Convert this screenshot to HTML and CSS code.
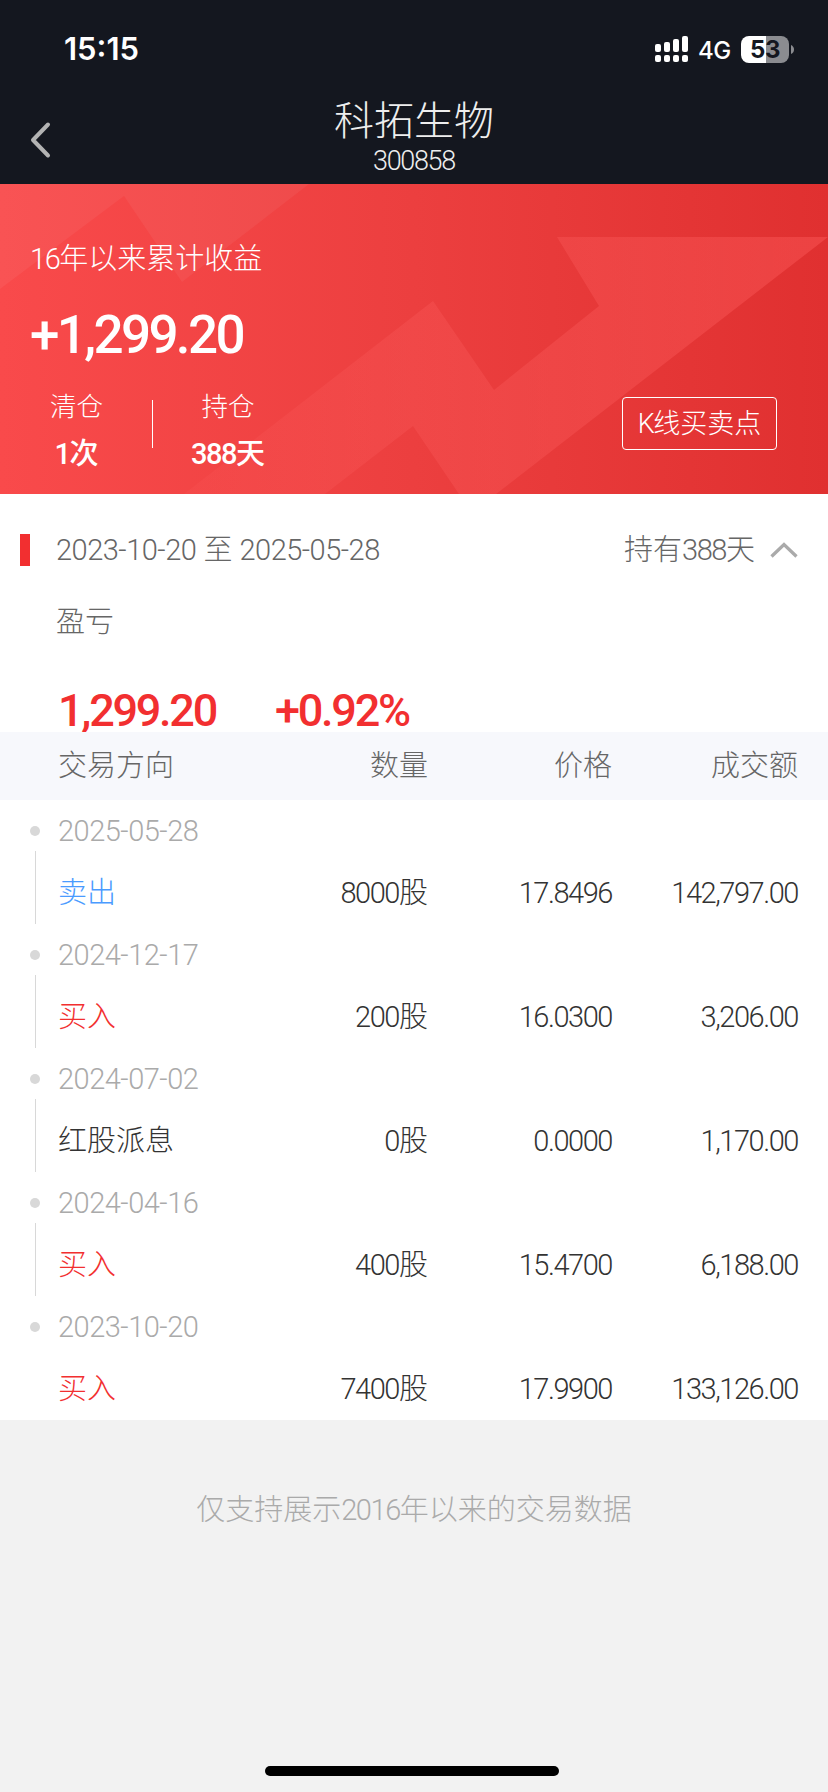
FILE: index.html
```html
<!DOCTYPE html>
<html lang="zh-CN">
<head>
<meta charset="utf-8">
<title>科拓生物</title>
<link rel="stylesheet" href="styles.css">
</head>
<body>
<header class="top">
  <div class="status">
    <span class="time">15:15</span>
    <div class="status-right">
      <svg class="signal" width="33" height="26" viewBox="0 0 33 26" fill="#fff">
        <rect x="0" y="8" width="6" height="8" rx="2"/><rect x="9" y="6" width="6" height="10" rx="2"/><rect x="18" y="3" width="6" height="13" rx="2"/><rect x="27" y="0" width="6" height="16" rx="2"/>
        <rect x="0" y="19" width="6" height="7" rx="2"/><rect x="9" y="19" width="6" height="7" rx="2"/><rect x="18" y="19" width="6" height="7" rx="2"/><rect x="27" y="19" width="6" height="7" rx="2"/>
      </svg>
      <span class="net">4G</span>
      <span class="battery">53</span>
      <svg class="nub" width="3" height="9" viewBox="0 0 3 9"><path d="M0 0Q3 1.5 3 4.5T0 9Z" fill="#8b8c90"/></svg>
    </div>
  </div>
  <nav class="nav">
    <svg class="back" width="22" height="38" viewBox="0 0 22 38" fill="none" stroke="#b3b3b3" stroke-width="4" stroke-linecap="round" stroke-linejoin="round"><path d="M18 3.500L3 19L18 34.500"/></svg>
    <div class="heading">
      <h1 class="title">科拓生物</h1>
      <div class="code num">300858</div>
    </div>
  </nav>
</header>

<section class="hero">
  <svg class="hero-art" width="828" height="310" viewBox="0 0 828 310">
    <defs><linearGradient id="arrow" gradientUnits="userSpaceOnUse" x1="184" y1="0" x2="828" y2="0"><stop offset="0" stop-color="#ff6464" stop-opacity=".12"/><stop offset=".35" stop-color="#ff6464" stop-opacity=".24"/><stop offset="1" stop-color="#ff5c5c" stop-opacity=".42"/></linearGradient></defs>
    <path d="M0 0H309L182 98L124 12L0 105Z" fill="#fff" fill-opacity=".05"/>
    <path d="M184 310L433 117L494 206L599 122L557 53H828L496 310H459L413 242L325 310Z" fill="url(#arrow)"/>
  </svg>
  <div class="hero-body">
    <div class="hero-label"><span class="num">16</span>年以来累计收益</div>
    <div class="hero-value num">+1,299.20</div>
    <div class="hero-row">
      <div class="stat stat-a"><span class="stat-name">清仓</span><span class="stat-value"><span class="num">1</span>次</span></div>
      <div class="rule"></div>
      <div class="stat stat-b"><span class="stat-name">持仓</span><span class="stat-value"><span class="num">388</span>天</span></div>
      <button class="kline"><span class="num">K</span>线买卖点</button>
    </div>
  </div>
</section>

<section class="period">
  <div class="period-head">
    <span class="marker"></span>
    <span class="range"><span class="date">2023-10-20</span> 至 <span class="date">2025-05-28</span></span>
    <span class="held">持有<span class="num">388</span>天</span>
    <svg class="chev" width="28" height="18" viewBox="0 0 28 18" fill="none" stroke="#aaa" stroke-width="3.300"><path d="M1.500 15.500L14 3.500L26.500 15.500"/></svg>
  </div>
  <div class="pl-label">盈亏</div>
  <div class="pl"><span class="pl-amount num">1,299.20</span><span class="pl-rate num">+0.92%</span></div>
</section>

<div class="cols thead"><span>交易方向</span><span>数量</span><span>价格</span><span>成交额</span></div>
<main class="list">
  <article class="trade">
    <div class="day"><i class="dot"></i><span class="date">2025-05-28</span></div>
    <div class="cols entry"><span class="sell">卖出</span><span><span class="num">8000</span>股</span><span class="num">17.8496</span><span class="num">142,797.00</span></div>
  </article>
  <article class="trade">
    <div class="day"><i class="dot"></i><span class="date">2024-12-17</span></div>
    <div class="cols entry"><span class="buy">买入</span><span><span class="num">200</span>股</span><span class="num">16.0300</span><span class="num">3,206.00</span></div>
  </article>
  <article class="trade">
    <div class="day"><i class="dot"></i><span class="date">2024-07-02</span></div>
    <div class="cols entry"><span>红股派息</span><span><span class="num">0</span>股</span><span class="num">0.0000</span><span class="num">1,170.00</span></div>
  </article>
  <article class="trade">
    <div class="day"><i class="dot"></i><span class="date">2024-04-16</span></div>
    <div class="cols entry"><span class="buy">买入</span><span><span class="num">400</span>股</span><span class="num">15.4700</span><span class="num">6,188.00</span></div>
  </article>
  <article class="trade">
    <div class="day"><i class="dot"></i><span class="date">2023-10-20</span></div>
    <div class="cols entry"><span class="buy">买入</span><span><span class="num">7400</span>股</span><span class="num">17.9900</span><span class="num">133,126.00</span></div>
  </article>
</main>
<footer class="foot">
  <p class="note">仅支持展示<span class="num">2016</span>年以来的交易数据</p>
  <div class="home"></div>
</footer>
</body>
</html>
```
FILE: styles.css
```css
* { box-sizing: border-box; }
body {
  margin: 0;
  width: 828px;
  height: 1792px;
  display: flex;
  flex-direction: column;
  overflow: hidden;
  background: #f2f2f2;
  color: #333;
  font-family: Roboto, "Noto Sans CJK SC", sans-serif;
  font-size: 29px;
  font-weight: 300;
  font-stretch: 90%;
  line-height: 40px;
}
.num { letter-spacing: -0.05em; }
.date { letter-spacing: -0.5px; }

.top { height: 184px; background: #14171f; color: #fff; }
.status { height: 98px; padding: 0 34px 0 64px; display: flex; align-items: center; justify-content: space-between; font-family: Inter, sans-serif; }
.time { font-size: 31px; font-weight: 600; }
.status-right { display: flex; align-items: center; }
.net { margin-left: 10px; width: 33px; font-size: 24px; font-weight: 500; letter-spacing: -0.5px; margin-top: 3px; }
.battery { margin-left: 10px; width: 48px; height: 27px; border-radius: 8px; background: linear-gradient(90deg, #fff 25px, #8b8c90 25px); color: #14171f; font-size: 24px; font-weight: 700; line-height: 27px; text-align: center; letter-spacing: -0.5px; }
.nub { margin-left: 2px; }
.nav { height: 86px; display: grid; grid-template-columns: 100px 1fr 100px; }
.back { margin: 23px 0 0 30px; }
.heading { text-align: center; }
.title { margin: 0; font-size: 40px; line-height: 48px; font-weight: 300; color: #eee; }
.code { font-size: 27px; line-height: 31px; color: #eee; }

.hero { position: relative; height: 310px; background: linear-gradient(90deg, #f94a4b, #ec3f3f 50%, #e03030); color: #fff; }
.hero-art { position: absolute; left: 0; top: 0; }
.hero-body { position: relative; padding: 55px 51px 0 30px; }
.hero-label { line-height: 40px; }
.hero-value { margin-top: 24px; font-size: 53px; line-height: 64px; font-weight: 500; }
.hero-row { margin-top: 20px; display: flex; }
.stat { display: flex; flex-direction: column; align-items: center; font-size: 26.500px; line-height: 40px; }
.stat-a { width: 93px; }
.stat-b { width: 150px; }
.stat-value { margin-top: 7px; font-weight: 500; font-size: 29px; }
.rule { width: 1px; height: 48px; margin: 13px 0 0 29px; background: #fff; }
.kline { margin: 10px 0 0 auto; width: 155px; height: 53px; padding: 0; border: 1px solid #fff; border-radius: 4px; background: none; color: #fff; font: inherit; font-size: 27px; }

.period { height: 238px; background: #fff; color: #666; }
.period-head { padding: 36px 30px 0 20px; display: flex; align-items: center; }
.marker { width: 10px; height: 32px; background: #f22f30; }
.range { margin-left: 26px; }
.held { margin-left: auto; margin-right: 15px; }
.pl-label { margin: 32px 0 0 56px; }
.pl { display: flex; margin: 39px 0 0 58px; font-size: 45px; line-height: 60px; font-weight: 500; color: #f22f30; }
.pl { margin-top: 39px; }
.pl-amount { width: 217px; }

.cols { display: grid; grid-template-columns: 220px 150px 184px 186px; padding-left: 58px; }
.cols > :not(:first-child) { text-align: right; }
.thead { height: 68px; line-height: 68px; background: #f7f8fc; color: #666; }
.list { background: #fff; }
.trade { height: 124px; background: linear-gradient(#d8d8d8, #d8d8d8) 35px 51px / 1px 73px no-repeat; }
.trade:last-child { background: none; }
.day { display: flex; align-items: center; height: 62px; padding-left: 30px; color: #aaa; }
.dot { width: 10px; height: 10px; margin-right: 18px; border-radius: 50%; background: #d8d8d8; }
.entry { height: 62px; line-height: 62px; }
.sell { color: #4a9bff; }
.buy { color: #f22f30; }
.foot { flex: 1; display: flex; flex-direction: column; align-items: center; justify-content: space-between; padding: 70px 0 16px; }
.note { margin: 0; color: #aaa; }
.home { width: 294px; height: 10px; border-radius: 5px; background: #000; position: relative; left: -2px; }
```
